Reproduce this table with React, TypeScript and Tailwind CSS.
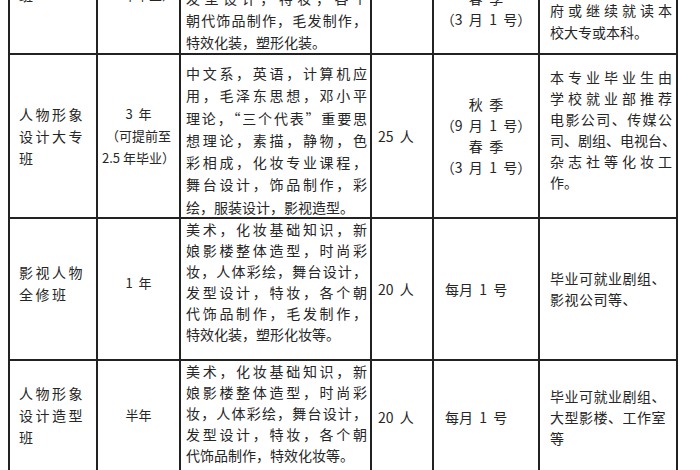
const cellFont = "font-['Noto_Sans_CJK_SC','Noto_Sans',sans-serif] text-[#262626] text-[14px]";

type Row = {
  name: string[];
  namePad: string;
  years: string[];
  courses: string[];
  courseLead: string;
  coursePad: string;
  people: string;
  start: string[];
  startLeft?: boolean;
  jobs: string[];
  jobsJustify?: boolean;
};

const Justified = ({ lines, lastPlain = true }: { lines: string[]; lastPlain?: boolean }) => (
  <>
    {lines.map((line, i) => (
      <div
        key={i}
        className={
          lastPlain && i === lines.length - 1
            ? "whitespace-nowrap"
            : "whitespace-nowrap [text-align-last:justify] text-justify"
        }
      >
        {line}
      </div>
    ))}
  </>
);

const rows: Row[] = [
  {
    name: ["人物形象", "设计大专", "班"],
    namePad: "pb-0",
    years: ["3  年", "（可提前至", "2.5 年毕业）"],
    courses: [
      "中文系，英语，计算机应",
      "用，毛泽东思想，邓小平",
      "理论，“三个代表”重要思",
      "想理论，素描，静物，色",
      "彩相成，化妆专业课程，",
      "舞台设计，饰品制作，彩",
      "绘，服装设计，影视造型。",
    ],
    courseLead: "leading-[22.3px]",
    coursePad: "pt-[7px]",
    people: "25  人",
    start: ["秋  季", "（9  月  1  号）", "春  季", "（3  月  1  号）"],
    jobs: ["本专业毕业生由", "学校就业部推荐", "电影公司、传媒公", "司、剧组、电视台、", "杂志社等化妆工", "作。"],
    jobsJustify: true,
  },
  {
    name: ["影视人物", "全修班"],
    namePad: "pb-[12px]",
    years: ["1  年"],
    courses: [
      "美术，化妆基础知识，新",
      "娘影楼整体造型，时尚彩",
      "妆，人体彩绘，舞台设计，",
      "发型设计，特妆，各个朝",
      "代饰品制作，毛发制作，",
      "特效化装，塑形化妆等。",
    ],
    courseLead: "leading-[21px]",
    coursePad: "pt-0",
    people: "20  人",
    start: ["每月  1  号"],
    startLeft: true,
    jobs: ["毕业可就业剧组、", "影视公司等、"],
  },
  {
    name: ["人物形象", "设计造型", "班"],
    namePad: "pb-[4px]",
    years: ["半年"],
    courses: [
      "美术，化妆基础知识，新",
      "娘影楼整体造型，时尚彩",
      "妆，人体彩绘，舞台设计，",
      "发型设计，特妆，各个朝",
      "代饰品制作，特效化妆等。",
    ],
    courseLead: "leading-[21px]",
    coursePad: "pt-0",
    people: "20  人",
    start: ["每月  1  号"],
    startLeft: true,
    jobs: ["毕业可就业剧组、", "大型影楼、工作室", "等"],
  },
];

export default function App() {
  return (
    <div className="w-[700px] h-[470px] overflow-hidden bg-white">
      <div
        className={`ml-[8px] grid w-[670px] grid-cols-[86px_81px_189px_60px_104px_136px] grid-rows-[53px_162px_140px_112px] gap-[2px] bg-[#222] px-[2px] pb-[2px] whitespace-pre ${cellFont}`}
      >
        {/* first row, cut by the top edge of the shot */}
        <div className="flex flex-col justify-end overflow-hidden bg-white pb-[47px] pl-[9px] leading-[22px] tracking-[2.5px]">
          <div>人物形象</div>
          <div>设计化妆</div>
          <div>班</div>
        </div>
        <div className="flex flex-col items-center justify-end overflow-hidden bg-white pb-[47px] text-[13px] leading-[22px]">
          <div>2  年</div>
          <div>（可提前至</div>
          <div>1.5 年毕业）</div>
        </div>
        <div className="flex flex-col justify-end overflow-hidden bg-white pl-[5px] pr-[3px] leading-[22px]">
          <Justified lines={["发型设计，特妆，各个", "朝代饰品制作，毛发制作，", "特效化装，塑形化装。"]} />
        </div>
        <div className="bg-white" />
        <div className="flex flex-col items-center justify-end overflow-hidden bg-white pb-[23px] leading-[21px]">
          <div>秋  季</div>
          <div>（9  月  1  号）</div>
          <div>春  季</div>
          <div>（3  月  1  号）</div>
        </div>
        <div className="flex flex-col justify-end overflow-hidden bg-white pb-[10px] pl-[10px] pr-[4px] leading-[22px]">
          <Justified lines={["本专业毕业生可由学", "校推荐到政府机关、事业", "单位工作，也可以到政", "府或继续就读本"]} lastPlain={false} />
          <div>校大专或本科。</div>
        </div>

        {rows.map((row) => (
          <div key={row.name.join("")} className="contents">
            <div className={`flex flex-col justify-center bg-white pl-[9px] leading-[22px] tracking-[2.5px] ${row.namePad}`}>
              {row.name.map((t) => (
                <div key={t}>{t}</div>
              ))}
            </div>
            <div className={`flex flex-col items-center justify-center bg-white text-[13px] leading-[22px] ${row.namePad}`}>
              {row.years.map((t) => (
                <div key={t}>{t}</div>
              ))}
            </div>
            <div className={`overflow-hidden bg-white pl-[5px] pr-[3px] ${row.courseLead} ${row.coursePad}`}>
              <Justified lines={row.courses} />
            </div>
            <div className="flex items-center bg-white pl-[6px]">{row.people}</div>
            <div
              className={`flex flex-col justify-center bg-white leading-[21px] ${
                row.startLeft ? "items-start pl-[11px]" : "items-center"
              }`}
            >
              {row.start.map((t) => (
                <div key={t}>{t}</div>
              ))}
            </div>
            <div
              className={`flex flex-col justify-center bg-white pl-[10px] pr-[4px] leading-[21px] ${
                row.jobsJustify ? "pb-[12px]" : "tracking-[0.5px]"
              }`}
            >
              {row.jobsJustify ? (
                <Justified lines={row.jobs} />
              ) : (
                row.jobs.map((t) => <div key={t}>{t}</div>)
              )}
            </div>
          </div>
        ))}
      </div>
    </div>
  );
}
